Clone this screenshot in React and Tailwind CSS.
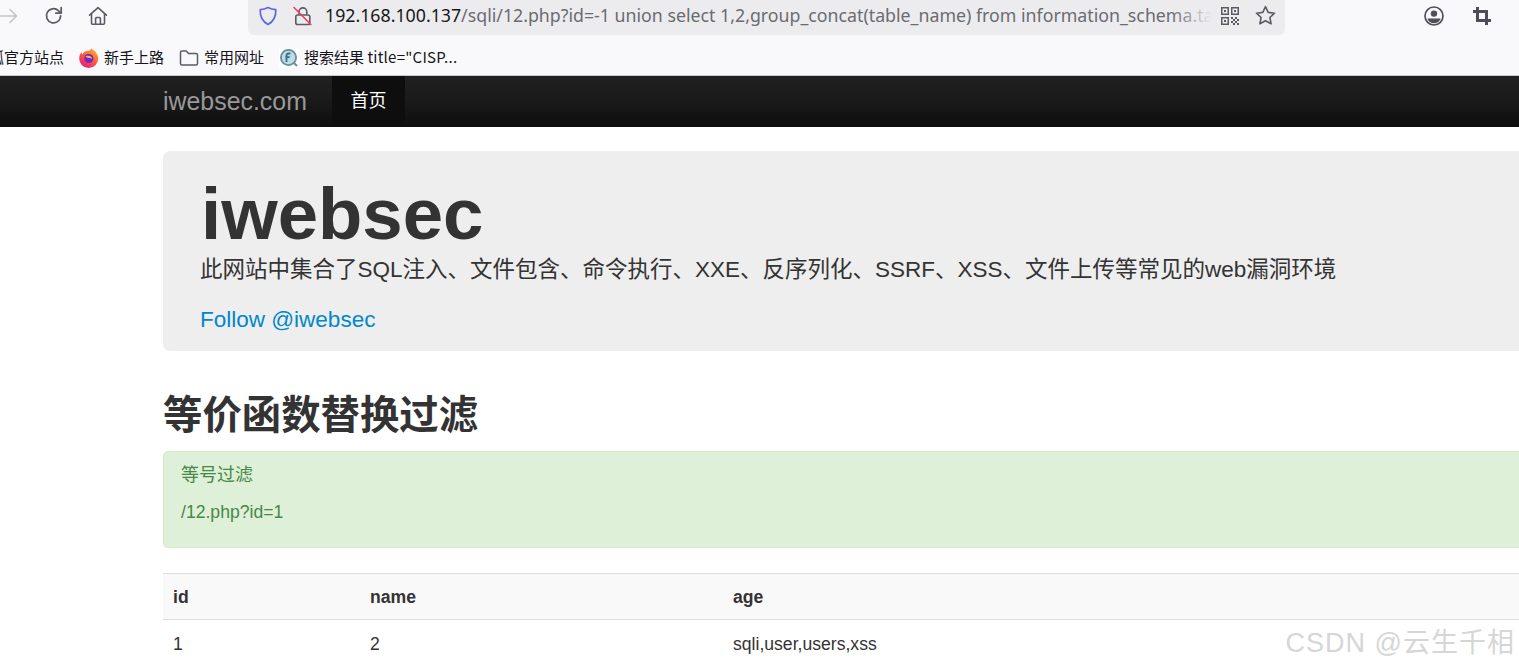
import React from 'react';

const SANS = "font-['Liberation_Sans','Noto_Sans_CJK_SC',sans-serif]";

const IconBack = () => (
  <svg width="20" height="20" viewBox="0 0 20 20" fill="none" stroke="#c4c4c8" strokeWidth="1.6" strokeLinecap="round" strokeLinejoin="round">
    <path d="M0 10h17M11 3.500l6.500 6.500-6.500 6.500" />
  </svg>
);

const IconReload = () => (
  <svg width="20" height="20" viewBox="0 0 20 20" fill="none" stroke="#5b5b66" strokeWidth="1.7" strokeLinecap="round" strokeLinejoin="round">
    <path d="M16.600 9.800a7.100 7.100 0 1 1-2.200-5.100L16.800 7" />
    <path d="M17.200 1.600v5.600h-5.400" />
  </svg>
);

const IconHome = () => (
  <svg width="20" height="20" viewBox="0 0 20 20" fill="none" stroke="#5b5b66" strokeWidth="1.6" strokeLinecap="round" strokeLinejoin="round">
    <path d="M1.600 9.200 10 1.600l8.400 7.600" />
    <path d="M3.500 8v9.200c0 .6.500 1 1 1h11c.5 0 1-.4 1-1V8" />
    <path d="M7.600 18v-5.500c0-.6.400-1 1-1h2.800c.6 0 1 .4 1 1V18" />
  </svg>
);

const IconShield = () => (
  <svg width="20" height="20" viewBox="0 0 20 20" fill="none" strokeWidth="1.7" strokeLinejoin="round">
    <defs>
      <linearGradient id="shieldStroke" x1="0" y1="0" x2="1" y2="1">
        <stop offset="0" stopColor="#7a5cf0" />
        <stop offset="1" stopColor="#3f6fe8" />
      </linearGradient>
    </defs>
    <path stroke="url(#shieldStroke)" d="M10 1.500c2.300 1.300 4.800 2 7.800 2.200.3 6.600-2.100 11.600-7.800 14.800C4.300 15.300 1.900 10.300 2.200 3.700c3-.2 5.500-.9 7.800-2.200z" />
  </svg>
);

const IconLockOff = () => (
  <svg width="20" height="20" viewBox="0 0 20 20" fill="none" strokeWidth="1.6" strokeLinecap="round">
    <path stroke="#5b5b66" d="M6 8V5.800a3.900 3.900 0 0 1 7.800 0V8" />
    <rect x="2.800" y="9" width="14" height="9.500" rx="1.800" stroke="#5b5b66" />
    <path stroke="#ee3a5e" d="M1 1.500 17.800 18.500" />
  </svg>
);

const IconQr = () => (
  <svg width="18" height="18" viewBox="0 0 18 18" fill="#5b5b66">
    <path fillRule="evenodd" d="M0 0h8v8H0zM1.500 1.500v5h5v-5zM10 0h8v8h-8zM11.500 1.500v5h5v-5zM0 10h8v8H0zM1.500 11.500v5h5v-5z" />
    <path d="M3 3h2v2H3zM13 3h2v2h-2zM3 13h2v2H3zM10 10h2v2h-2zM12 12h2v2h-2zM14 10h2v2h-2zM16 12h2v2h-2zM10 14h2v2h-2zM14 14h2v2h-2zM12 16h2v2h-2zM16 16h2v2h-2z" />
  </svg>
);

const IconStar = () => (
  <svg width="21" height="21" viewBox="0 0 21 21" fill="none" stroke="#5b5b66" strokeWidth="1.6" strokeLinejoin="round">
    <path d="M10.500 1.600l2.700 5.800 6.300.8-4.600 4.300 1.200 6.300-5.600-3.100-5.600 3.100 1.200-6.300-4.600-4.300 6.300-.8z" />
  </svg>
);

const IconAccount = () => (
  <svg width="20" height="20" viewBox="0 0 20 20" fill="none">
    <circle cx="10" cy="10" r="9" stroke="#4f4f59" strokeWidth="1.700" />
    <circle cx="10" cy="7.600" r="3.200" fill="#4f4f59" />
    <path d="M3.400 12.400h13.200A7.200 7.200 0 0 1 10 17.200a7.200 7.200 0 0 1-6.600-4.800z" fill="#4f4f59" />
  </svg>
);

const IconCrop = () => (
  <svg width="18" height="18" viewBox="0 0 18 18" fill="none" stroke="#4f4b5c" strokeWidth="3">
    <path d="M4.500 0v13.500H18" />
    <path d="M0 4.500h13.500V18" />
  </svg>
);

const IconFirefox = () => (
  <svg width="20" height="20" viewBox="0 0 20 20">
    <defs>
      <linearGradient id="foxBody" x1="0.800" y1="0" x2="0.200" y2="1">
        <stop offset="0" stopColor="#ffb52c" />
        <stop offset="0.500" stopColor="#ff5a3c" />
        <stop offset="1" stopColor="#e31587" />
      </linearGradient>
    </defs>
    <path fill="url(#foxBody)" d="M12.500 0c.8 1.800 3.200 2.500 4.700 4.800 1.600 2.400 2 4.600 2 5.700a9.500 9.500 0 0 1-19 0C.2 8 1.100 5.700 2.500 4.300c.1 1 .5 1.600 1 1.900C4.200 4.400 6 3.200 8 3c2.200-.3 4-1.300 4.500-3z" />
    <circle cx="9.800" cy="10.500" r="4.600" fill="#6b2bd0" />
    <path fill="#ffb52c" d="M6.500 8.600c1-1 3.500-1.200 5-.3 1 .6 1.700 1.700 1.500 3-.7-1-1.800-1.500-3-1.400-1.300.1-2.600-.3-3.500-1.300z" />
  </svg>
);

const IconFolder = () => (
  <svg width="20" height="20" viewBox="0 0 20 20" fill="none" stroke="#5b5b66" strokeWidth="1.500" strokeLinejoin="round">
    <path d="M1.500 4.500c0-.9.600-1.500 1.500-1.500h4.200l2.300 2.500H17c.9 0 1.500.6 1.500 1.500v8.500c0 .9-.6 1.500-1.500 1.500H3c-.9 0-1.500-.6-1.500-1.500z" />
  </svg>
);

const IconFofa = () => (
  <svg width="20" height="20" viewBox="0 0 20 20">
    <rect width="20" height="20" fill="#ffffff" />
    <circle cx="9.500" cy="9.500" r="7.600" fill="#bcdce6" stroke="#6b8c9c" strokeWidth="1.800" />
    <path d="M15 15l3 3" stroke="#6b8c9c" strokeWidth="2" />
    <path d="M7.500 14V7.500c0-1.300.9-2 2.200-2h1.800M6.400 9.200h4.400" fill="none" stroke="#35708c" strokeWidth="1.800" />
  </svg>
);

const BrowserChrome = () => (
  <div className="h-[76px] bg-[#f9f9fb] border-b border-[#c9c9cc] shrink-0">
    {/* Toolbar */}
    <div className="h-[35px] flex items-center">
      <div className="flex items-center w-[248px] pb-[4px]">
        <span className="-ml-[1px] w-[45px]"><IconBack /></span>
        <span className="w-[44px]"><IconReload /></span>
        <IconHome />
      </div>
      <div className="w-[1037px] h-[35px] bg-[#ececef] rounded-b-[6px] flex items-center pl-[10px] pb-[4px]">
        <IconShield />
        <span className="ml-[15px]"><IconLockOff /></span>
        <div className="relative ml-[12px] -mt-[1px] w-[887px] overflow-hidden whitespace-nowrap text-[17.75px] leading-[26px] text-[#6b6b70] font-['Noto_Sans','Noto_Sans_CJK_SC',sans-serif]">
          <span className="text-[#17171a]">192.168.100.137</span>/sqli/12.php?id=-1 union select 1,2,group_concat(table_name) from information_schema.tables
          <span className="absolute right-0 top-0 bottom-0 w-[40px] bg-gradient-to-r from-transparent to-[#ececef]" />
        </div>
        <span className="ml-[9px]"><IconQr /></span>
        <span className="ml-[16px]"><IconStar /></span>
      </div>
      <span className="ml-[139px] pb-[4px]"><IconAccount /></span>
      <span className="ml-[29px] pb-[4px]"><IconCrop /></span>
    </div>
    {/* Bookmarks */}
    <div className="h-[40px] pt-[5px] flex items-center whitespace-nowrap text-[15px] text-[#15141a] font-['Noto_Sans_CJK_SC','Noto_Sans',sans-serif]">
      <span className="-ml-[11px] w-[90px]">狐官方站点</span>
      <IconFirefox />
      <span className="ml-[5px] w-[75px]">新手上路</span>
      <IconFolder />
      <span className="ml-[5px] w-[75px]">常用网址</span>
      <IconFofa />
      <span className="ml-[5px]">搜索结果 <span className="tracking-[0.25px]">title="CISP...</span></span>
    </div>
  </div>
);

const Navbar = () => (
  <div className="h-[51px] bg-gradient-to-b from-[#212121] via-[#1a1a1a] to-[#0d0d0d] flex pl-[163px] shrink-0">
    <span className="w-[169px] text-[24.9px] leading-[51px] text-[#999999]">iwebsec.com</span>
    <span className="w-[73px] bg-[#0e0e0e] text-[18px] leading-[51px] text-white text-center">首页</span>
  </div>
);

const rows = [{ id: '1', name: '2', age: 'sqli,user,users,xss' }];

const App = () => (
  <div className={`relative h-[669px] overflow-hidden bg-white flex flex-col text-[#333333] ${SANS}`}>
    <BrowserChrome />
    <Navbar />

    <main className="pl-[163px] pt-[24px]">
      {/* Hero */}
      <section className="h-[200px] bg-[#eeeeee] rounded-l-[7px] pl-[37px] whitespace-nowrap">
        <h1 className="text-[72.6px] leading-[79px] font-bold pt-[23px] box-content h-[79px] pl-[1px]">iwebsec</h1>
        <p className="text-[22.5px] leading-[32px] mt-[1px]">此网站中集合了SQL注入、文件包含、命令执行、XXE、反序列化、SSRF、XSS、文件上传等常见的web漏洞环境</p>
        <p className="text-[22.5px] leading-[32px] mt-[18px] text-[#0088cc]">Follow @iwebsec</p>
      </section>

      <h2 className="text-[39.4px] leading-[44px] font-bold mt-[42px]">等价函数替换过滤</h2>

      {/* Alert */}
      <div className="mt-[14px] h-[97px] bg-[#dff0d8] border border-[#d6e9c6] border-r-0 rounded-l-[5px] pl-[17px] pt-[10px] text-[18px] text-[#468847]">
        <p className="leading-[27px]">等号过滤</p>
        <p className="leading-[27px] mt-[10px] text-[17.6px]">/12.php?id=1</p>
      </div>

      {/* Result table */}
      <table className="mt-[25px] w-full table-fixed text-left text-[17.6px]">
        <thead>
          <tr className="h-[46px] bg-[#f9f9f9] border-t border-b border-[#dddddd]">
            <th className="w-[197px] pl-[10px] pt-[2px] font-bold">id</th>
            <th className="w-[363px] pl-[10px] pt-[2px] font-bold">name</th>
            <th className="pl-[10px] pt-[2px] font-bold">age</th>
          </tr>
        </thead>
        <tbody>
          {rows.map((row) => (
            <tr key={row.id} className="h-[46px]">
              <td className="pl-[10px] pt-[2px]">{row.id}</td>
              <td className="pl-[10px] pt-[2px]">{row.name}</td>
              <td className="pl-[10px] pt-[2px]">{row.age}</td>
            </tr>
          ))}
        </tbody>
      </table>
    </main>

    {/* Watermark */}
    <span className="absolute right-[4px] top-[625px] text-[27px] leading-[36px] tracking-[1px] text-[#d6d6d6] whitespace-nowrap">CSDN @云生千相</span>
  </div>
);

export default App;
